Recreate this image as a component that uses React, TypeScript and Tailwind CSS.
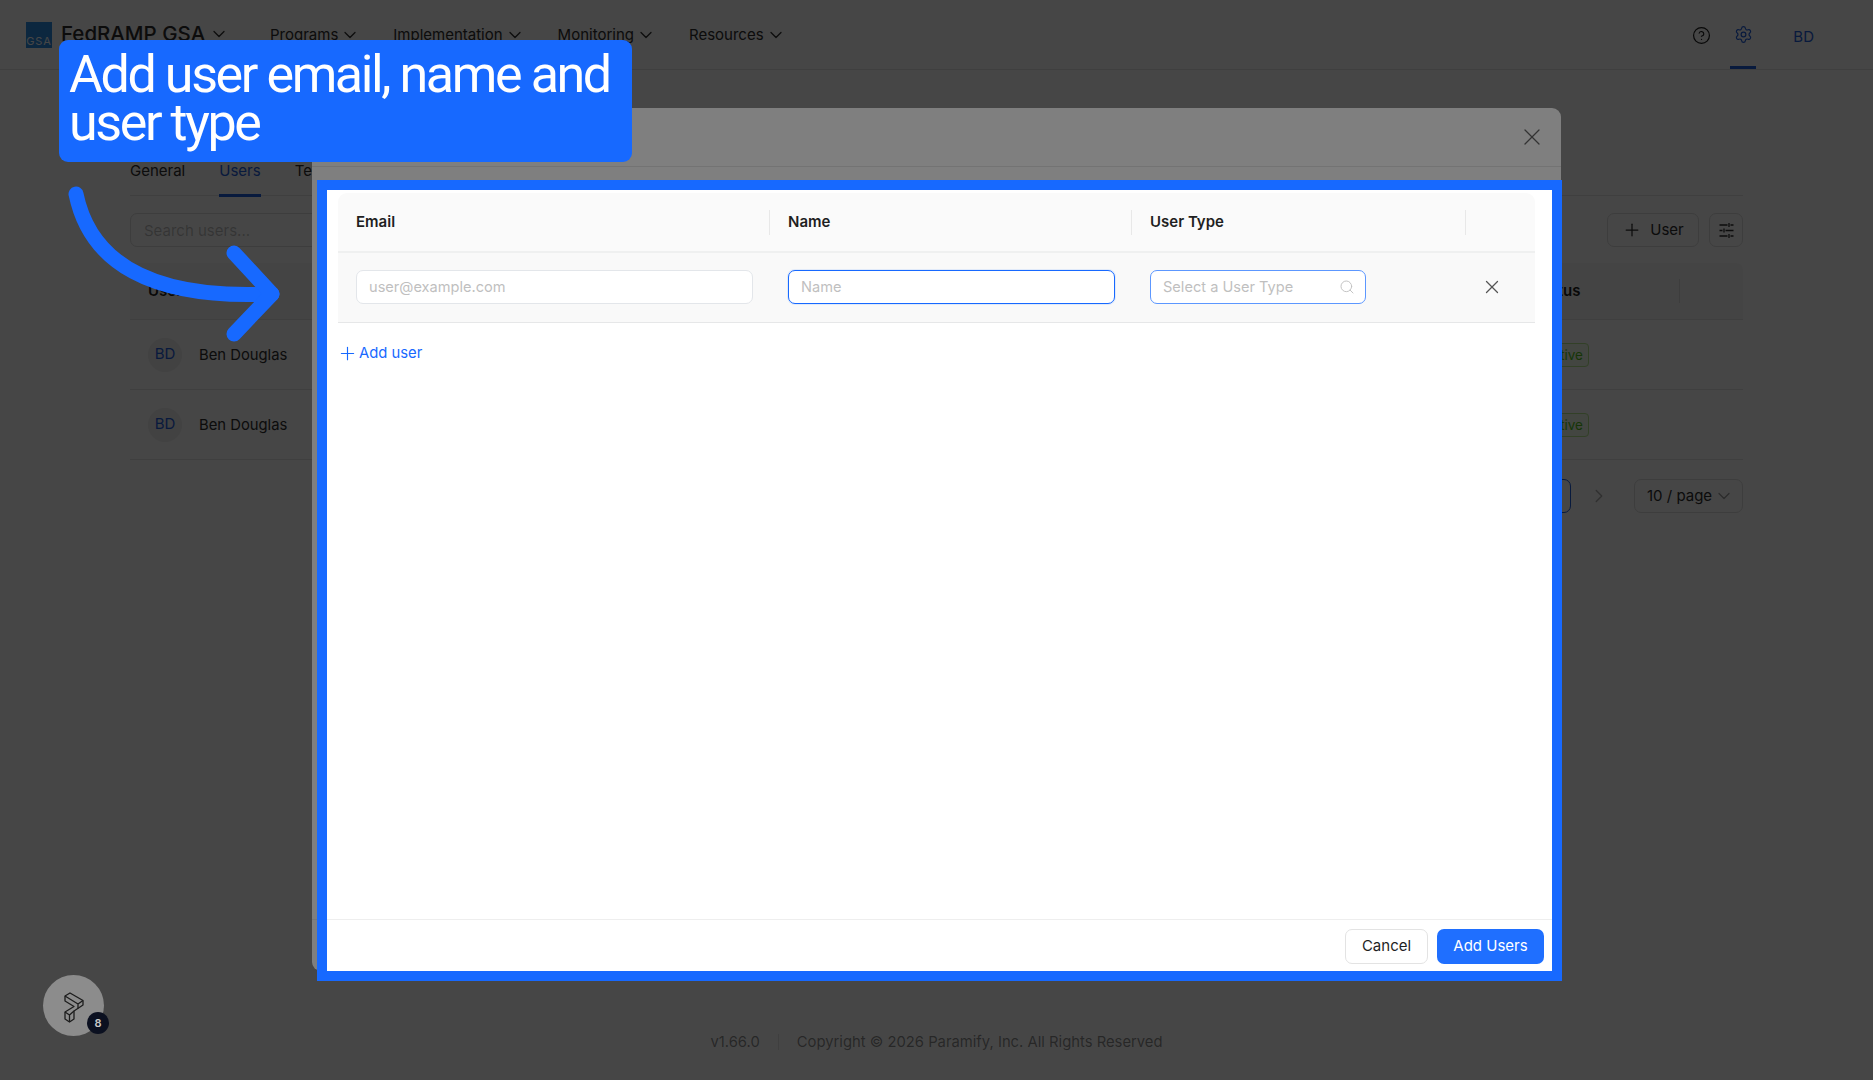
import React from 'react';
import { ChevronDown, ChevronRight, CircleHelp, Plus, Search, Settings, X } from 'lucide-react';

const font = 'font-["Inter","Liberation_Sans",sans-serif]';

const navItems = ['Programs', 'Implementation', 'Monitoring', 'Resources'];

const Header = () => (
    <header className="h-[70px] shrink-0 flex items-center border-b border-[#e6e6e6] pl-[26px]">
        <div className="w-[26px] h-[26px] bg-[#2f8fe8] flex items-end justify-center pb-[1px] text-[11px] leading-none text-white tracking-[0.8px]">
            GSA
        </div>
        <div className="ml-[9px] flex items-center text-[20.5px] font-medium text-[#2e2e2e] w-[209px] -mt-[1px]">
            FedRAMP GSA
            <ChevronDown size={20} strokeWidth={1.5} className="ml-[4px]" />
        </div>
        <nav className="flex items-center gap-[33px] text-[15px] text-[#2e2e2e] mt-[1px]">
            {navItems.map((item) => (
                <div key={item} className="flex items-center gap-[2px]">
                    {item}
                    <ChevronDown size={20} strokeWidth={1.5} />
                </div>
            ))}
        </nav>
        <div className="ml-auto h-full flex items-center">
            <CircleHelp size={19} strokeWidth={1.5} className="text-[#1f1f1f] mt-[2px]" />
            <div className="ml-[19px] w-[26px] h-full flex items-center justify-center border-b-[3px] border-[#1f5fe0] pt-[2px]">
                <Settings size={19} strokeWidth={1.5} className="text-[#1f5fe0]" />
            </div>
            <span className="ml-[37px] mr-[59px] mt-[6px] text-[15px] text-[#1f5fe0]">BD</span>
        </div>
    </header>
);

const UserRow = () => (
    <div className="h-[70px] flex items-center border-b border-[#e8e8e8] pl-[18px]">
        <div className="w-[34px] h-[34px] rounded-full bg-[#f0f0f0] flex items-center justify-center text-[15px] text-[#1f5fe0]">
            BD
        </div>
        <span className="ml-[17px] mt-[1px] text-[14.8px] text-[#2e2e2e]">Ben Douglas</span>
        <div className="ml-auto w-[208px]">
            <span className="inline-block h-[24px] w-[54px] leading-[22px] px-[7px] border border-[#b7eb8f] bg-[#f6ffed] rounded-[4px] text-[13.5px] text-[#52c41a]">
                Active
            </span>
        </div>
    </div>
);

const BackgroundPage = () => (
    <div className="h-full flex flex-col">
        <Header />
        <main className="px-[130px] mt-[76px]">
            <div className="h-[50px] flex gap-[34px] border-b border-[#e6e6e6] text-[15px] text-[#2e2e2e]">
                <div className="pt-[14px]">General</div>
                <div className="pt-[14px] text-[#1f5fe0] border-b-[3px] border-[#1f5fe0] h-[51px]">Users</div>
                <div className="pt-[14px]">Teams</div>
            </div>
            <div className="mt-[17px] flex items-center">
                <input
                    readOnly
                    placeholder="Search users..."
                    className="w-[300px] h-[34px] px-[13px] rounded-[7px] border border-[#e0e0e0] text-[15px] placeholder:text-black/25 outline-none"
                />
                <button className="ml-auto w-[92px] h-[34px] flex items-center justify-center gap-[8px] rounded-[7px] border border-[#e0e0e0] text-[15px] text-[#2e2e2e]">
                    <Plus size={20} strokeWidth={1.5} />
                    User
                </button>
                <button className="ml-[10px] w-[34px] h-[34px] flex items-center justify-center rounded-[7px] border border-[#e0e0e0] text-[#2e2e2e]">
                    <svg width="15" height="17" viewBox="0 0 15 17" fill="none" stroke="currentColor" strokeWidth="1.3">
                        <path d="M.5 3h8M11.5 3h3M10 1v4M.5 8.5h3M6.5 8.5h8M5 6.5v4M.5 14h8M11.5 14h3M10 12v4" />
                    </svg>
                </button>
            </div>
            <div className="mt-[16px] h-[57px] bg-[#fafafa] rounded-t-[7px] flex items-center border-b border-[#e8e8e8] pl-[18px] text-[15px] font-semibold text-[#1f1f1f]">
                User
                <span className="ml-auto w-[145px]">Status</span>
                <span className="w-px h-[24px] bg-[#e0e0e0] mr-[63px]" />
            </div>
            <UserRow />
            <UserRow />
            <div className="mt-[19px] flex items-center justify-end">
                <div className="w-[34px] h-[34px] rounded-[7px] border border-[#1f5fe0] text-[#1f5fe0] text-[15px] flex items-center justify-center">
                    1
                </div>
                <ChevronRight size={22} strokeWidth={1.5} className="ml-[17px] mr-[24px] text-[#b0b0b0]" />
                <div className="w-[109px] h-[34px] rounded-[7px] border border-[#e0e0e0] flex items-center justify-between pl-[12px] pr-[8px] text-[15px] text-[#2e2e2e]">
                    10 / page
                    <ChevronDown size={20} strokeWidth={1.5} className="text-[#a0a0a0]" />
                </div>
            </div>
        </main>
        <footer className="mt-auto mb-[27px] flex items-center justify-center gap-[18px] text-[14.8px] text-black/45">
            <span>v1.66.0</span>
            <span className="w-px h-[16px] bg-[#e6e6e6]" />
            <span>Copyright © 2026 Paramify, Inc. All Rights Reserved</span>
        </footer>
    </div>
);

const Field = ({ placeholder, focused, className }: { placeholder: string; focused?: boolean; className?: string }) => (
    <input
        readOnly
        placeholder={placeholder}
        className={`h-[34px] px-[12px] rounded-[7px] bg-white border outline-none text-[14.6px] placeholder:text-[#bfbfbf] ${focused ? 'border-[#1769ff] shadow-[0_0_0_1px_rgba(23,105,255,0.1)]' : 'border-[#e3e6ea]'} ${className ?? ''}`}
    />
);

const Modal = () => (
    <div className="absolute left-[312px] top-[108px] w-[1249px] h-[863px] bg-white rounded-[9px] flex flex-col overflow-hidden">
        <div className="h-[59px] shrink-0 border-b border-[#e6e6e6] flex items-center justify-end pr-[15px]">
            <X size={28} strokeWidth={1.1} className="text-[#666666]" />
        </div>
        <div className="flex-1 px-[26px] pt-[26px]">
            <div className="h-[60px] flex items-center bg-[#fafafa] rounded-t-[9px] border-b-2 border-[#eff0f0] text-[15px] font-semibold text-[#1f1f1f]">
                <div className="w-[432px] pl-[18px] flex items-center justify-between">
                    Email
                    <span className="w-px h-[25px] bg-[#e8e8e8]" />
                </div>
                <div className="w-[362px] pl-[18px] flex items-center justify-between">
                    Name
                    <span className="w-px h-[25px] bg-[#e8e8e8]" />
                </div>
                <div className="w-[334px] pl-[18px] flex items-center justify-between">
                    User Type
                    <span className="w-px h-[25px] bg-[#e8e8e8]" />
                </div>
            </div>
            <div className="h-[70px] pb-[1px] flex items-center bg-[#f9f9f9] border-b border-[#e6e7e8]">
                <div className="w-[432px] px-[18px]">
                    <Field placeholder="user@example.com" className="w-[397px]" />
                </div>
                <div className="w-[362px] pl-[18px]">
                    <Field placeholder="Name" focused className="w-[327px]" />
                </div>
                <div className="w-[334px] pl-[18px]">
                    <div className="w-[216px] h-[34px] pl-[12px] pr-[10px] rounded-[7px] bg-white border border-[#5c97ff] flex items-center justify-between text-[14.6px] text-[#bfbfbf]">
                        <span className="mt-[1px]">Select a User Type</span>
                        <Search size={16} strokeWidth={1.4} />
                    </div>
                </div>
                <X size={22} strokeWidth={1.4} className="ml-[15px] text-[#555555]" />
            </div>
            <div className="mt-[19px] -ml-[1px] flex items-center gap-[1px] text-[14.8px] text-[#1769ff]">
                <Plus size={21} strokeWidth={1.3} />
                Add user
            </div>
        </div>
        <div className="h-[52px] shrink-0 border-t border-[#eeeeee] flex items-start justify-end gap-[9px] pt-[9px] pr-[17px] text-[15px]">
            <button className="w-[83px] h-[35px] rounded-[7px] border border-[#e3e3e3] bg-white text-[#1f1f1f]">Cancel</button>
            <button className="w-[107px] h-[35px] rounded-[7px] bg-[#1f6fff] text-white">Add Users</button>
        </div>
    </div>
);

const Arrow = () => (
    <svg className="absolute left-0 top-0 pointer-events-none" width="320" height="360" fill="none" stroke="#1769ff" strokeWidth="15" strokeLinecap="round" strokeLinejoin="round">
        <path d="M76 194 C90 262 150 300 272 294" />
        <path d="M234 253 L272 294 L234 334" />
    </svg>
);

const ParamifyBadge = () => (
    <div className="absolute left-[43px] top-[975px] w-[61px] h-[61px] rounded-full bg-[#8c8c8c] flex items-center justify-center">
        <svg width="30" height="40" viewBox="0 0 30 40" fill="none" stroke="#1c1c1c" strokeWidth="1.3" strokeLinejoin="round" className="ml-[-4px]">
            <path d="M8 10 L13 7 L26 14.5 L26 19 L17 25 L17 33 L12.5 36 L8 33 L8 26 L17 20.5 L8 15 Z" />
            <path d="M8 10 L21 18 L26 14.5 M21 18 V22.5 M8 26 L12.5 29 L17 25 M12.5 29 V36" />
        </svg>
        <span className="absolute left-[44px] top-[37px] w-[22px] h-[22px] rounded-full bg-[#0b1020] text-[#c9c9c9] text-[11px] font-semibold flex items-center justify-center">
            8
        </span>
    </div>
);

const App = () => {
    return (
        <div className={`relative w-[1873px] h-[1080px] overflow-hidden bg-white ${font}`}>
            <BackgroundPage />
            <div className="absolute inset-0 bg-black/45" />
            <Modal />
            {/* highlighted area, the huge shadow dims everything around it */}
            <div className="absolute left-[317px] top-[180px] w-[1245px] h-[801px] border-[10px] border-[#1769ff] shadow-[0_0_0_3000px_rgba(0,0,0,0.5)] pointer-events-none" />
            <div className="absolute left-[59px] top-[40px] w-[573px] h-[122px] rounded-[9px] bg-[#1769ff] pl-[10px] pt-[11px] font-['Roboto',sans-serif] text-[52px] leading-[48px] tracking-[-2.4px] text-white">
                Add user email, name and user type
            </div>
            <Arrow />
            <ParamifyBadge />
        </div>
    );
};

export default App;
